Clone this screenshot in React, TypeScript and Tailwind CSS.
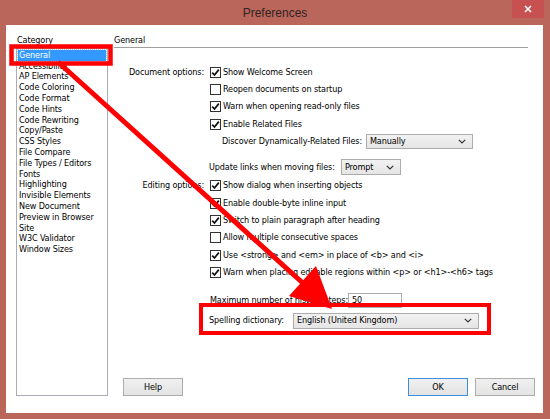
import React from "react";

const categories = [
  "General",
  "Accessibility",
  "AP Elements",
  "Code Coloring",
  "Code Format",
  "Code Hints",
  "Code Rewriting",
  "Copy/Paste",
  "CSS Styles",
  "File Compare",
  "File Types / Editors",
  "Fonts",
  "Highlighting",
  "Invisible Elements",
  "New Document",
  "Preview in Browser",
  "Site",
  "W3C Validator",
  "Window Sizes",
];

const Check = ({ checked }: { checked: boolean }) => (
  <span className="w-[11px] h-[11px] border border-[#333] bg-white flex items-center justify-center shrink-0">
    {checked && (
      <svg width="9" height="9" viewBox="0 0 9 9">
        <path d="M1.2 4.6 L3.5 7 L7.8 1.6" fill="none" stroke="#111" strokeWidth="1.7" />
      </svg>
    )}
  </span>
);

const Chevron = () => (
  <svg width="8" height="5" viewBox="0 0 8 5" className="shrink-0">
    <path d="M0.8 0.8 L4 4 L7.2 0.8" fill="none" stroke="#333" strokeWidth="1.2" />
  </svg>
);

const Select = ({ value, className }: { value: string; className: string }) => (
  <div
    className={
      "shrink-0 flex items-center justify-between pl-[3px] pr-[6px] border border-[#acacac] bg-gradient-to-b from-[#f2f2f2] to-[#e5e5e5] " +
      className
    }
  >
    <span>{value}</span>
    <Chevron />
  </div>
);

const CheckRow = ({
  label,
  text,
  checked,
}: {
  label?: string;
  text: string;
  checked: boolean;
}) => (
  <div className="flex items-center h-[17.4px]">
    <span className="w-[90px] text-right">{label}</span>
    <span className="ml-[6px]">
      <Check checked={checked} />
    </span>
    <span className="ml-[2px] whitespace-nowrap">{text}</span>
  </div>
);

const Button = ({ label, primary }: { label: string; primary?: boolean }) => (
  <div
    className={
      "w-[60px] h-[18px] flex items-center justify-center border bg-gradient-to-b from-[#f0f0f0] to-[#e3e3e3] " +
      (primary ? "border-[#3c8fe0]" : "border-[#adadad]")
    }
  >
    {label}
  </div>
);

export default function App() {
  return (
    <div className="relative w-[550px] h-[419px] bg-[#ba665b] flex flex-col text-[9px] tracking-[-0.12px] leading-none text-black font-['DejaVu_Sans_Condensed','Liberation_Sans',sans-serif]">
      {/* title bar */}
      <div className="relative h-[25px] flex items-center justify-center">
        <span className="text-[12px] tracking-normal text-[#2e2422] font-['Liberation_Sans',sans-serif]">Preferences</span>
        <div className="absolute right-[6px] top-0 w-[32px] h-[18px] bg-[#c75050] flex items-center justify-center">
          <svg width="8" height="8" viewBox="0 0 8 8">
            <path d="M1 1 L7 7 M7 1 L1 7" stroke="#fff" strokeWidth="1.5" />
          </svg>
        </div>
      </div>

      {/* client area */}
      <div className="flex-1 ml-[6px] mr-[7px] mb-[6px] bg-white flex pt-[8px]">
        {/* category column */}
        <div className="w-[102px] pl-[10px] flex flex-col">
          <div className="h-[15px] flex items-center pl-[1px]">Category</div>
          <div className="h-[348px] border border-[#a9adb3] pt-[1px] pl-[1px] pr-[1px]">
            {categories.map((c, i) => (
              <div
                key={c}
                className={
                  "h-[10.8px] flex items-center pl-[1px] whitespace-nowrap " +
                  (i === 0 ? "bg-[#3399ff] text-white outline outline-1 outline-dotted outline-[#9cc9ff]" : "")
                }
              >
                {c}
              </div>
            ))}
          </div>
        </div>

        {/* general panel */}
        <div className="flex-1 pl-[6px] flex flex-col">
          <div className="w-[414px] h-[15px] flex items-center border-b border-[#a0a0a0]">General</div>

          <div className="mt-[15.5px] flex flex-col">
            <CheckRow label="Document options:" text="Show Welcome Screen" checked />
            <CheckRow text="Reopen documents on startup" checked={false} />
            <CheckRow text="Warn when opening read-only files" checked />
            <CheckRow text="Enable Related Files" checked />
            <div className="flex items-center h-[16px] pl-[108px]">
              <span className="w-[144px] shrink-0 whitespace-nowrap">Discover Dynamically-Related Files:</span>
              <Select value="Manually" className="w-[107px] h-[15px]" />
            </div>
            <div className="flex items-center h-[18px] mt-[9px] pl-[95px]">
              <span className="w-[132px] shrink-0 whitespace-nowrap">Update links when moving files:</span>
              <Select value="Prompt" className="w-[60px] h-[16px]" />
            </div>
            <div className="mt-[1px]">
              <CheckRow label="Editing options:" text="Show dialog when inserting objects" checked />
              <CheckRow text="Enable double-byte inline input" checked />
              <CheckRow text="Switch to plain paragraph after heading" checked />
              <CheckRow text="Allow multiple consecutive spaces" checked={false} />
              <CheckRow text="Use <strong> and <em> in place of <b> and <i>" checked />
              <CheckRow text="Warn when placing editable regions within <p> or <h1>-<h6> tags" checked />
            </div>
            <div className="flex items-center h-[16px] mt-[11px] pl-[96px]">
              <span className="w-[138px] shrink-0 whitespace-nowrap">Maximum number of history steps:</span>
              <div className="w-[54px] h-[15px] shrink-0 border border-[#acacac] flex items-center pl-[3px]">50</div>
            </div>
            <div className="flex items-center h-[17px] mt-[4px] pl-[95px]">
              <span className="w-[84px] shrink-0 whitespace-nowrap">Spelling dictionary:</span>
              <Select value="English (United Kingdom)" className="w-[186px] h-[16px]" />
            </div>
          </div>

          <div className="mt-auto mb-[17px] flex items-center pl-[9px] pr-[8px]">
            <Button label="Help" />
            <div className="ml-auto flex gap-[7px]">
              <Button label="OK" primary />
              <Button label="Cancel" />
            </div>
          </div>
        </div>
      </div>

      {/* annotation overlay */}
      <svg className="absolute left-0 top-0 pointer-events-none" width="550" height="419" viewBox="0 0 550 419">
        <rect x="11.5" y="46.5" width="99" height="17" fill="none" stroke="#f00" strokeWidth="4.5" />
        <rect x="201" y="305" width="288" height="28" fill="none" stroke="#f00" strokeWidth="4" />
        <line x1="58" y1="62" x2="305" y2="285" stroke="#f00" strokeWidth="5" />
        <polygon points="332,309 289,296 316,266" fill="#f00" />
      </svg>
    </div>
  );
}
